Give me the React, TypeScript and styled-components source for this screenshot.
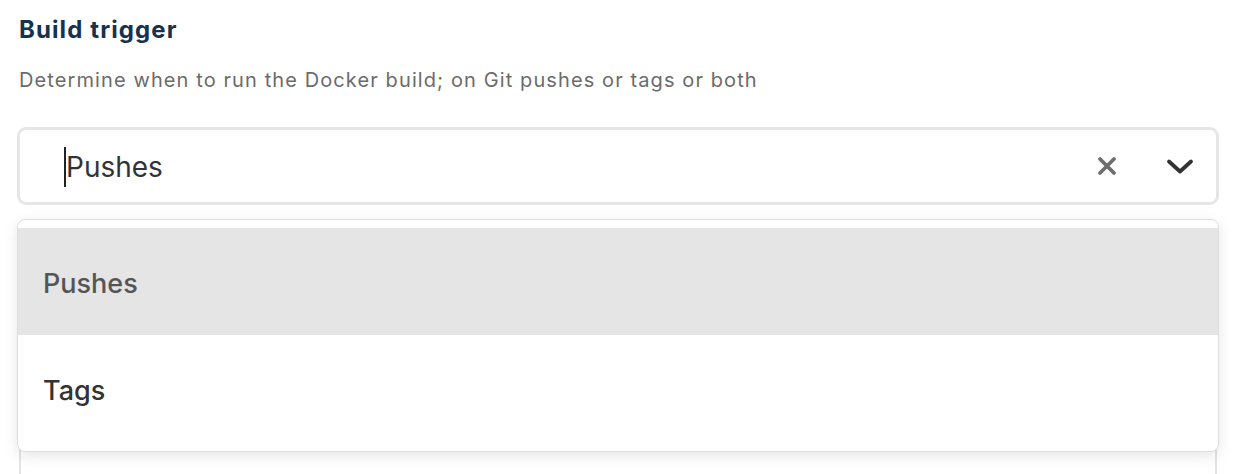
import React from "react";
import styled, { createGlobalStyle } from "styled-components";

const Global = createGlobalStyle`
  html, body { margin: 0; padding: 0; background: #ffffff; }
  body { font-family: Inter, "Noto Sans", sans-serif; }
`;

const Page = styled.div`
  padding: 14px 21px 0 17px;
  width: 1240px;
  height: 474px;
  box-sizing: border-box;
  overflow: hidden;
`;

const Title = styled.h2`
  margin: 0 0 0 2px;
  font-size: 24px;
  line-height: 32px;
  font-weight: 700;
  letter-spacing: 1.1px;
  color: #17324d;
`;

const Help = styled.p`
  margin: 21px 0 0 2px;
  font-size: 20px;
  line-height: 26px;
  letter-spacing: 1.1px;
  color: #6b6b6b;
`;

const Field = styled.div`
  position: relative;
  margin-top: 34px;
`;

const Control = styled.div`
  display: flex;
  align-items: center;
  height: 78px;
  box-sizing: border-box;
  border: 3px solid #e6e6e6;
  border-radius: 9px;
  padding: 0 16px 0 44px;
  background: #fff;
`;

const Value = styled.div`
  flex: 1;
  display: flex;
  align-items: center;
  padding-top: 2px;
  font-size: 28px;
  color: #333;
`;

const Caret = styled.span`
  display: inline-block;
  width: 2px;
  height: 40px;
  background: #222;
`;

const IconButton = styled.span<{ gap?: number }>`
  display: flex;
  align-items: center;
  justify-content: center;
  width: 40px;
  height: 40px;
  margin-left: ${(p) => p.gap ?? 0}px;
`;

const Menu = styled.div`
  position: absolute;
  z-index: 2;
  left: 0;
  right: 0;
  top: 92px;
  background: #fff;
  border: 1.5px solid #dedede;
  border-radius: 8px;
  padding: 8px 0 9px;
  box-shadow: 0 4px 14px rgba(0, 0, 0, 0.1);
`;

const Option = styled.div<{ active?: boolean }>`
  height: 107px;
  box-sizing: border-box;
  padding: 4px 0 0 25px;
  display: flex;
  align-items: center;
  font-size: 27px;
  font-weight: 500;
  color: ${(p) => (p.active ? "#555" : "#333")};
  background: ${(p) => (p.active ? "#e5e5e5" : "#fff")};
`;

const NextControl = styled.div`
  margin-top: 14px;
  margin-left: 2px;
  margin-right: 2px;
  height: 260px;
  border: 2px solid #e4e4e4;
  border-radius: 8px;
`;

export default function App() {
  return (
    <>
      <Global />
      <Page>
        <Title>Build trigger</Title>
        <Help>Determine when to run the Docker build; on Git pushes or tags or both</Help>
        <Field>
          <Control>
            <Value>
              <Caret />
              Pushes
            </Value>
            <IconButton>
              <svg width="20" height="20" viewBox="0 0 20 20">
                <path d="M3 3 L17 17 M17 3 L3 17" stroke="#6e6e6e" strokeWidth="3.8" strokeLinecap="round" fill="none" />
              </svg>
            </IconButton>
            <IconButton gap={33}>
              <svg width="28" height="17" viewBox="0 0 28 17">
                <path d="M3 3.5 L14 13.5 L25 3.5" stroke="#333" strokeWidth="3.8" strokeLinecap="round" strokeLinejoin="round" fill="none" />
              </svg>
            </IconButton>
          </Control>
          <Menu>
            <Option active>Pushes</Option>
            <Option>Tags</Option>
          </Menu>
          <NextControl />
        </Field>
      </Page>
    </>
  );
}
